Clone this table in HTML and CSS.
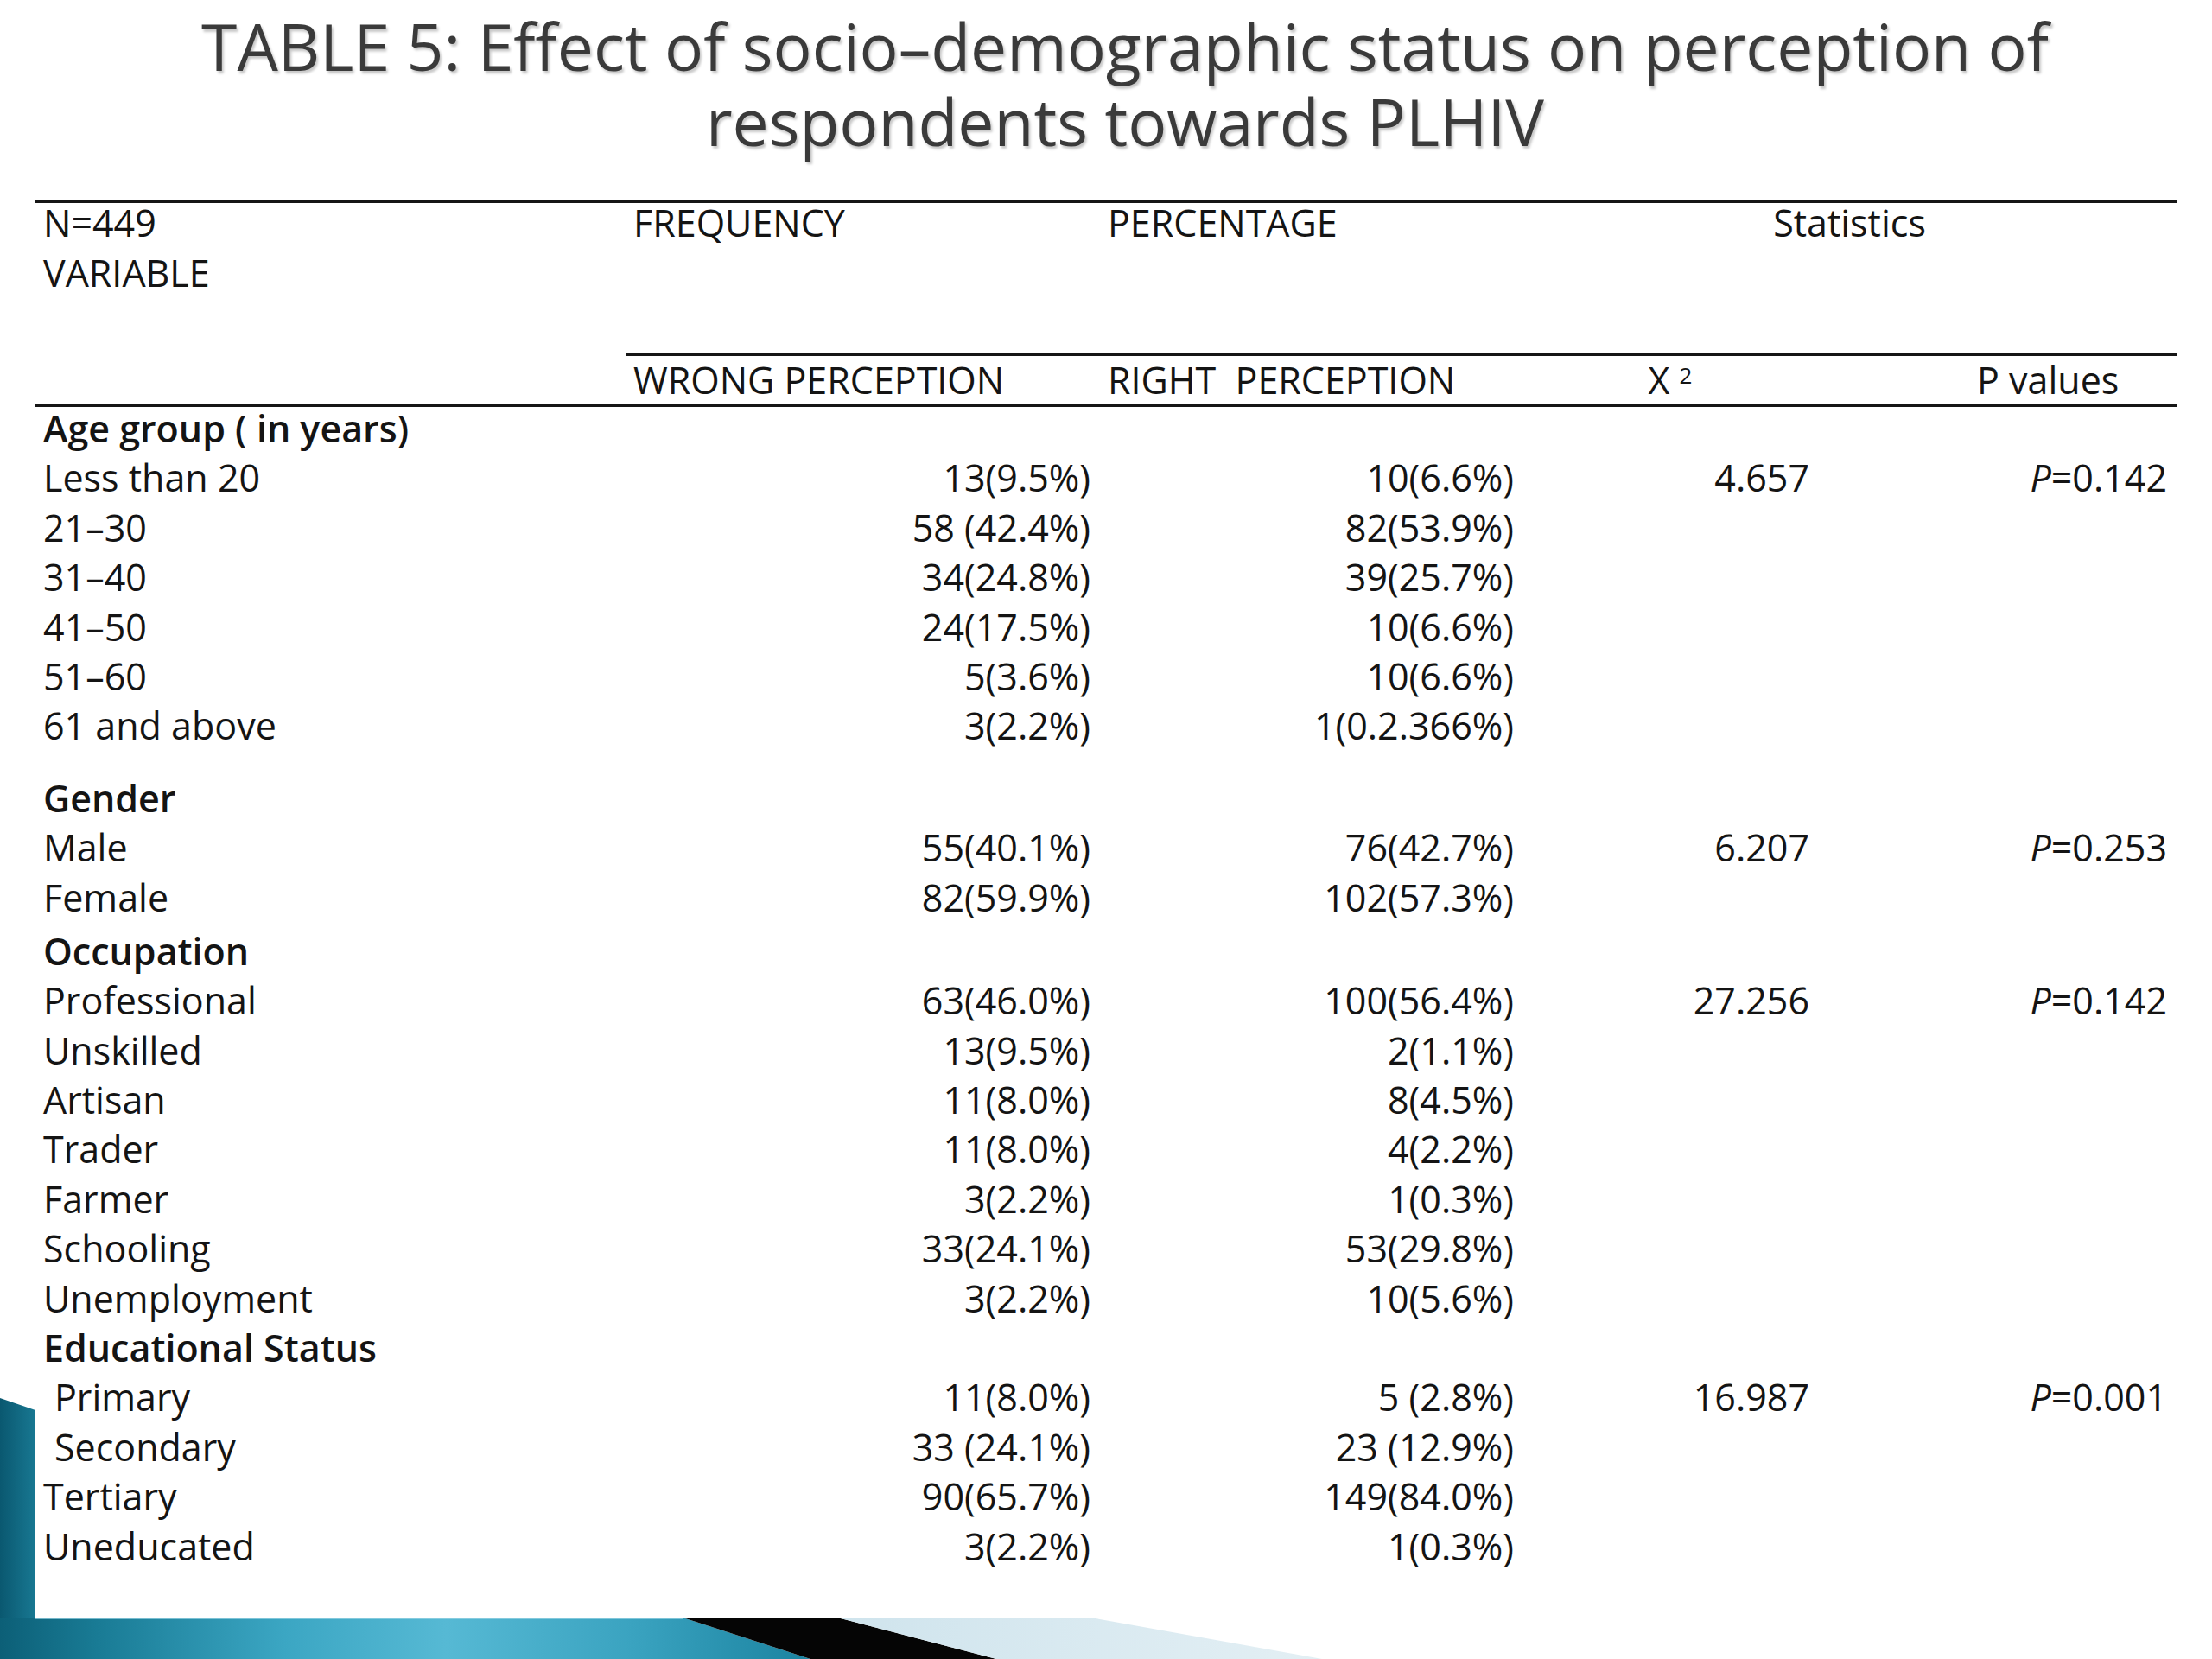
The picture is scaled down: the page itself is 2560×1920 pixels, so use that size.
FILE: index.html
```html
<!DOCTYPE html>
<html lang="en">
<head>
<meta charset="utf-8">
<title>TABLE 5</title>
<link rel="stylesheet" href="styles.css">
</head>
<body>
<div class="slide">
  <h1 class="title"><span class="tl">TABLE 5: Effect of socio–demographic status on perception of</span><span class="tl">respondents towards PLHIV</span></h1>

  <div class="table">
    <div class="hrow hrow1">
      <div class="c c1 hv"><div class="l1">N=449</div><div class="l2">VARIABLE</div></div>
      <div class="c c2 hl ruled">FREQUENCY</div>
      <div class="c c3 hl ruled">PERCENTAGE</div>
      <div class="c c45 hc ruled">Statistics</div>
    </div>
    <div class="hrow hrow2">
      <div class="c c1"></div>
      <div class="c c2 hl">WRONG PERCEPTION</div>
      <div class="c c3 hl">RIGHT&nbsp; PERCEPTION</div>
      <div class="c c4 hc">X <sup class="sq">2</sup></div>
      <div class="c c5 hp">P values</div>
    </div>

    <div class="tbody">
      <div class="row"><div class="c c1 sec">Age group ( in years)</div></div>
      <div class="row"><div class="c c1">Less than 20</div><div class="c c2 num">13(9.5%)</div><div class="c c3 num">10(6.6%)</div><div class="c c4 num">4.657</div><div class="c c5 num"><i>P</i>=0.142</div></div>
      <div class="row"><div class="c c1">21–30</div><div class="c c2 num">58 (42.4%)</div><div class="c c3 num">82(53.9%)</div></div>
      <div class="row"><div class="c c1">31–40</div><div class="c c2 num">34(24.8%)</div><div class="c c3 num">39(25.7%)</div></div>
      <div class="row"><div class="c c1">41–50</div><div class="c c2 num">24(17.5%)</div><div class="c c3 num">10(6.6%)</div></div>
      <div class="row"><div class="c c1">51–60</div><div class="c c2 num">5(3.6%)</div><div class="c c3 num">10(6.6%)</div></div>
      <div class="row"><div class="c c1">61 and above</div><div class="c c2 num">3(2.2%)</div><div class="c c3 num">1(0.2.366%)</div></div>

      <div class="row gap-lg"><div class="c c1 sec">Gender</div></div>
      <div class="row"><div class="c c1">Male</div><div class="c c2 num">55(40.1%)</div><div class="c c3 num">76(42.7%)</div><div class="c c4 num">6.207</div><div class="c c5 num"><i>P</i>=0.253</div></div>
      <div class="row"><div class="c c1">Female</div><div class="c c2 num">82(59.9%)</div><div class="c c3 num">102(57.3%)</div></div>

      <div class="row gap-sm"><div class="c c1 sec">Occupation</div></div>
      <div class="row"><div class="c c1">Professional</div><div class="c c2 num">63(46.0%)</div><div class="c c3 num">100(56.4%)</div><div class="c c4 num">27.256</div><div class="c c5 num"><i>P</i>=0.142</div></div>
      <div class="row"><div class="c c1">Unskilled</div><div class="c c2 num">13(9.5%)</div><div class="c c3 num">2(1.1%)</div></div>
      <div class="row"><div class="c c1">Artisan</div><div class="c c2 num">11(8.0%)</div><div class="c c3 num">8(4.5%)</div></div>
      <div class="row"><div class="c c1">Trader</div><div class="c c2 num">11(8.0%)</div><div class="c c3 num">4(2.2%)</div></div>
      <div class="row"><div class="c c1">Farmer</div><div class="c c2 num">3(2.2%)</div><div class="c c3 num">1(0.3%)</div></div>
      <div class="row"><div class="c c1">Schooling</div><div class="c c2 num">33(24.1%)</div><div class="c c3 num">53(29.8%)</div></div>
      <div class="row"><div class="c c1">Unemployment</div><div class="c c2 num">3(2.2%)</div><div class="c c3 num">10(5.6%)</div></div>

      <div class="row"><div class="c c1 sec">Educational Status</div></div>
      <div class="row"><div class="c c1 indent">Primary</div><div class="c c2 num">11(8.0%)</div><div class="c c3 num">5 (2.8%)</div><div class="c c4 num">16.987</div><div class="c c5 num"><i>P</i>=0.001</div></div>
      <div class="row"><div class="c c1 indent">Secondary</div><div class="c c2 num">33 (24.1%)</div><div class="c c3 num">23 (12.9%)</div></div>
      <div class="row"><div class="c c1">Tertiary</div><div class="c c2 num">90(65.7%)</div><div class="c c3 num">149(84.0%)</div></div>
      <div class="row"><div class="c c1">Uneducated</div><div class="c c2 num">3(2.2%)</div><div class="c c3 num">1(0.3%)</div></div>
      <div class="row filler"><div class="c c1"></div><div class="c c2 faint"></div></div>
    </div>
  </div>

  <svg class="deco" width="1600" height="320" viewBox="0 0 1600 320" aria-hidden="true">
    <defs>
      <linearGradient id="gBar" x1="0" y1="0" x2="1" y2="0">
        <stop offset="0" stop-color="#0c5f77"/>
        <stop offset="0.12" stop-color="#197b95"/>
        <stop offset="0.35" stop-color="#3ba6c3"/>
        <stop offset="0.55" stop-color="#56b9d4"/>
        <stop offset="0.78" stop-color="#3aa3c0"/>
        <stop offset="1" stop-color="#1b83a0"/>
      </linearGradient>
      <linearGradient id="gStrip" x1="0" y1="0" x2="1" y2="0">
        <stop offset="0" stop-color="#0a5870"/>
        <stop offset="1" stop-color="#187892"/>
      </linearGradient>
      <linearGradient id="gLight" x1="0" y1="0" x2="1" y2="0">
        <stop offset="0" stop-color="#cfe4ed"/>
        <stop offset="1" stop-color="#e3eff4"/>
      </linearGradient>
    </defs>
    <polygon points="0,18 41,32 41,320 0,320" fill="url(#gStrip)"/>
    <polygon points="0,272 790,272 938,320 0,320" fill="url(#gBar)"/>
    <line x1="41" y1="273" x2="790" y2="273" stroke="#9dd5e5" stroke-width="2" opacity="0.7"/>
    <polygon points="790,272 969,272 1153,320 938,320" fill="#050505"/>
    <polygon points="969,272 1262,272 1530,320 1153,320" fill="url(#gLight)"/>
  </svg>
</div>
</body>
</html>
```

FILE: styles.css
```css
* { box-sizing: border-box; }

html, body {
  margin: 0;
  padding: 0;
  background: #ffffff;
}

.slide {
  position: relative;
  width: 2560px;
  height: 1920px;
  overflow: hidden;
  background: #ffffff;
  font-family: "Open Sans", "Noto Sans", "Liberation Sans", sans-serif;
  color: #141414;
}

.title {
  margin: 0;
  padding: 10px 0 0 44px;
  font-family: "Open Sans", "Noto Sans", "Liberation Sans", sans-serif;
  font-weight: 400;
  font-size: 75px;
  line-height: 87px;
  color: #3a3a3a;
  text-align: center;
  text-shadow: 2px 3px 3px rgba(0, 0, 0, 0.22);
}

.tl {
  display: block;
  height: 87px;
}

.table {
  position: relative;
  z-index: 1;
  margin: 47px 0 0 40px;
  width: 2479px;
  border-top: 4px solid #161616;
  background: #ffffff;
  font-size: 43px;
}

.hrow, .row {
  display: grid;
  grid-template-columns: 684px 548px 490px 342px 415px;
}

.c { white-space: pre; }

.c1 { grid-column: 1; padding-left: 10px; }
.c2 { grid-column: 2; }
.c3 { grid-column: 3; }
.c4 { grid-column: 4; }
.c5 { grid-column: 5; }
.c45 { grid-column: 4 / span 2; }

/* header row 1 */
.hrow1 { height: 177px; line-height: 46px; }
.hrow1 .ruled { border-bottom: 3px solid #161616; }
.hv .l2 { margin-top: 12px; }

.hl.c2 { padding-left: 9px; }
.hl.c3 { padding-left: 10px; }
.hc { text-align: center; }
.hp { padding-left: 184px; }

/* header row 2 */
.hrow2 {
  height: 59px;
  line-height: 55px;
  border-bottom: 4px solid #161616;
}

.sq {
  font-size: 26px;
  line-height: 0;
  vertical-align: 12px;
}

/* body */
.tbody { margin-top: -4px; }

.row {
  height: 57.4px;
  line-height: 57.4px;
}

.row.gap-lg { margin-top: 26px; }
.row.gap-sm { margin-top: 5px; }

.sec { font-weight: 600; }
.indent { padding-left: 23px; }

.num { text-align: right; }
.c2.num, .c3.num, .c4.num { padding-right: 10px; }
.c5.num { padding-right: 11px; }

.num i { font-style: italic; }

.row.filler { height: 54px; }
.faint { border-left: 1px solid #e2ebee; }

.deco {
  position: absolute;
  left: 0;
  top: 1600px;
  display: block;
}
```
